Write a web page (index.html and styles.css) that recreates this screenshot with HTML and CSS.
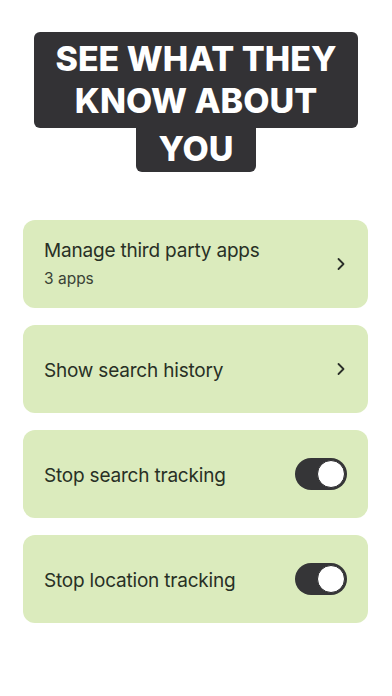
FILE: index.html
```html
<!DOCTYPE html>
<html lang="en">
<head>
  <meta charset="UTF-8">
  <meta name="viewport" content="width=device-width, initial-scale=1.0">
  <title>Privacy</title>
  <link rel="stylesheet" href="styles.css">
</head>
<body>
  <!-- Headline -->
  <div class="headline">
    <div class="headline-top">SEE WHAT THEY<br>KNOW ABOUT</div>
    <div class="headline-bottom">YOU</div>
  </div>

  <!-- Settings list -->
  <div class="list">
    <div class="card">
      <div class="card-text">
        <p class="card-title">Manage third party apps</p>
        <p class="card-sub">3 apps</p>
      </div>
      <svg class="chevron" width="10" height="14" viewBox="0 0 10 14">
        <path d="M2.5 2l5 5-5 5" fill="none" stroke="#2b2f2a" stroke-width="1.8" stroke-linecap="round" stroke-linejoin="round"/>
      </svg>
    </div>

    <div class="card">
      <div class="card-text">
        <p class="card-title">Show search history</p>
      </div>
      <svg class="chevron" width="10" height="14" viewBox="0 0 10 14">
        <path d="M2.5 2l5 5-5 5" fill="none" stroke="#2b2f2a" stroke-width="1.8" stroke-linecap="round" stroke-linejoin="round"/>
      </svg>
    </div>

    <div class="card">
      <div class="card-text">
        <p class="card-title">Stop search tracking</p>
      </div>
      <div class="toggle on"><span class="knob"></span></div>
    </div>

    <div class="card">
      <div class="card-text">
        <p class="card-title">Stop location tracking</p>
      </div>
      <div class="toggle on"><span class="knob"></span></div>
    </div>
  </div>
</body>
</html>
```

FILE: styles.css
```css
body {
  font-family: Inter, 'Noto Sans', sans-serif;
  margin: 0;
  padding: 0;
  background-color: #fff;
  color: #283025;
}

/* Headline */
.headline {
  padding-top: 32px;
  display: flex;
  flex-direction: column;
  align-items: center;
  color: #fff;
  font-weight: 800;
  font-size: 34px;
  line-height: 42px;
  text-align: center;
}

.headline-top {
  width: 324px;
  height: 96px;
  box-sizing: border-box;
  padding-top: 6px;
  background-color: #333235;
  border-radius: 6px;
}

.headline-bottom {
  width: 120px;
  height: 44px;
  background-color: #333235;
  border-radius: 0 0 6px 6px;
  line-height: 42px;
}

/* List */
.list {
  margin: 48px 24px 0 23px;
  display: flex;
  flex-direction: column;
  gap: 17px;
}

.card {
  height: 88px;
  box-sizing: border-box;
  padding: 0 21px 0 21px;
  background-color: #dbebbd;
  border-radius: 12px;
  display: flex;
  align-items: center;
  justify-content: space-between;
}

.card-text {
  padding-top: 3px;
}

.card-title {
  margin: 0;
  font-size: 19px;
  letter-spacing: -0.2px;
  line-height: 24px;
}

.card-sub {
  margin: 6px 0 0;
  font-size: 15.5px;
  line-height: 20px;
  color: #3a4236;
}

.card:first-child .card-text {
  padding-top: 0;
}

.chevron {
  margin-right: 1px;
}

/* Toggle */
.toggle {
  width: 52px;
  height: 32px;
  border-radius: 16px;
  background-color: #353537;
  position: relative;
}

.knob {
  position: absolute;
  top: 2px;
  right: 2px;
  width: 28px;
  height: 28px;
  box-sizing: border-box;
  border-radius: 50%;
  background-color: #fff;
  border: 1px solid #2b2b2d;
}
```
